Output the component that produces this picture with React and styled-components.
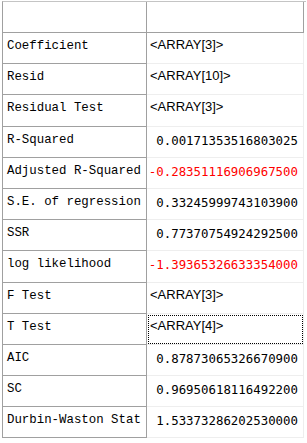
import React from "react";
import styled, { createGlobalStyle } from "styled-components";

const rows = [
  { name: "Coefficient", value: "<ARRAY[3]>", array: true },
  { name: "Resid", value: "<ARRAY[10]>", array: true },
  { name: "Residual Test", value: "<ARRAY[3]>", array: true },
  { name: "R-Squared", value: "0.00171353516803025" },
  { name: "Adjusted R-Squared", value: "-0.28351116906967500" },
  { name: "S.E. of regression", value: "0.33245999743103900" },
  { name: "SSR", value: "0.77370754924292500" },
  { name: "log likelihood", value: "-1.39365326633354000" },
  { name: "F Test", value: "<ARRAY[3]>", array: true },
  { name: "T Test", value: "<ARRAY[4]>", array: true, focused: true },
  { name: "AIC", value: "0.87873065326670900" },
  { name: "SC", value: "0.96950618116492200" },
  { name: "Durbin-Waston Stat", value: "1.53373286202530000" },
];

const GlobalStyle = createGlobalStyle`
  html, body {
    margin: 0;
    padding: 0;
    background: #ffffff;
  }
`;

const Page = styled.div`
  width: 307px;
  height: 443px;
  overflow: hidden;
  padding: 1px 0 0 2px;
  box-sizing: border-box;
`;

const Grid = styled.div`
  display: grid;
  grid-template-columns: 144px 157px;
  grid-template-rows: 31px;
  grid-auto-rows: 31.2px;
  width: 303px;
  border-top: 1px solid #c4c4c4;
  border-left: 1px solid #a0a0a0;
`;

const HeadCell = styled.div`
  background: #ffffff;
  border-right: 1px solid #a0a0a0;
  border-bottom: 1px solid #a0a0a0;
`;

const NameCell = styled.div`
  background: #ffffff;
  border-right: 1px solid #a0a0a0;
  border-bottom: 1px solid #a0a0a0;
  padding: 6px 0 0 4px;
  font-family: "Liberation Mono", "DejaVu Sans Mono", monospace;
  font-size: 12.4px;
  line-height: 14px;
  color: #000000;
  white-space: nowrap;
  overflow: hidden;
`;

const ValueCell = styled.div`
  border-right: 1px solid #eeeeee;
  border-bottom: 1px solid #eeeeee;
  padding: ${(p) => (p.$array ? "5px 0 0 3px" : "7px 5px 0 0")};
  text-align: ${(p) => (p.$array ? "left" : "right")};
  font-family: ${(p) =>
    p.$array
      ? '"Liberation Sans", sans-serif'
      : '"DejaVu Sans Mono", "Liberation Mono", monospace'};
  font-size: ${(p) => (p.$array ? "13px" : "12.4px")};
  line-height: 14px;
  color: ${(p) => (p.$negative ? "#ff0000" : "#000000")};
  white-space: nowrap;
  outline: ${(p) => (p.$focused ? "1px dotted #000000" : "none")};
  outline-offset: -2px;
`;

export default function App() {
  return (
    <Page>
      <GlobalStyle />
      <Grid>
        <HeadCell />
        <HeadCell />
        {rows.map((r) => (
          <React.Fragment key={r.name}>
            <NameCell>{r.name}</NameCell>
            <ValueCell
              $array={r.array}
              $focused={r.focused}
              $negative={r.value.startsWith("-")}
            >
              {r.value}
            </ValueCell>
          </React.Fragment>
        ))}
      </Grid>
    </Page>
  );
}
